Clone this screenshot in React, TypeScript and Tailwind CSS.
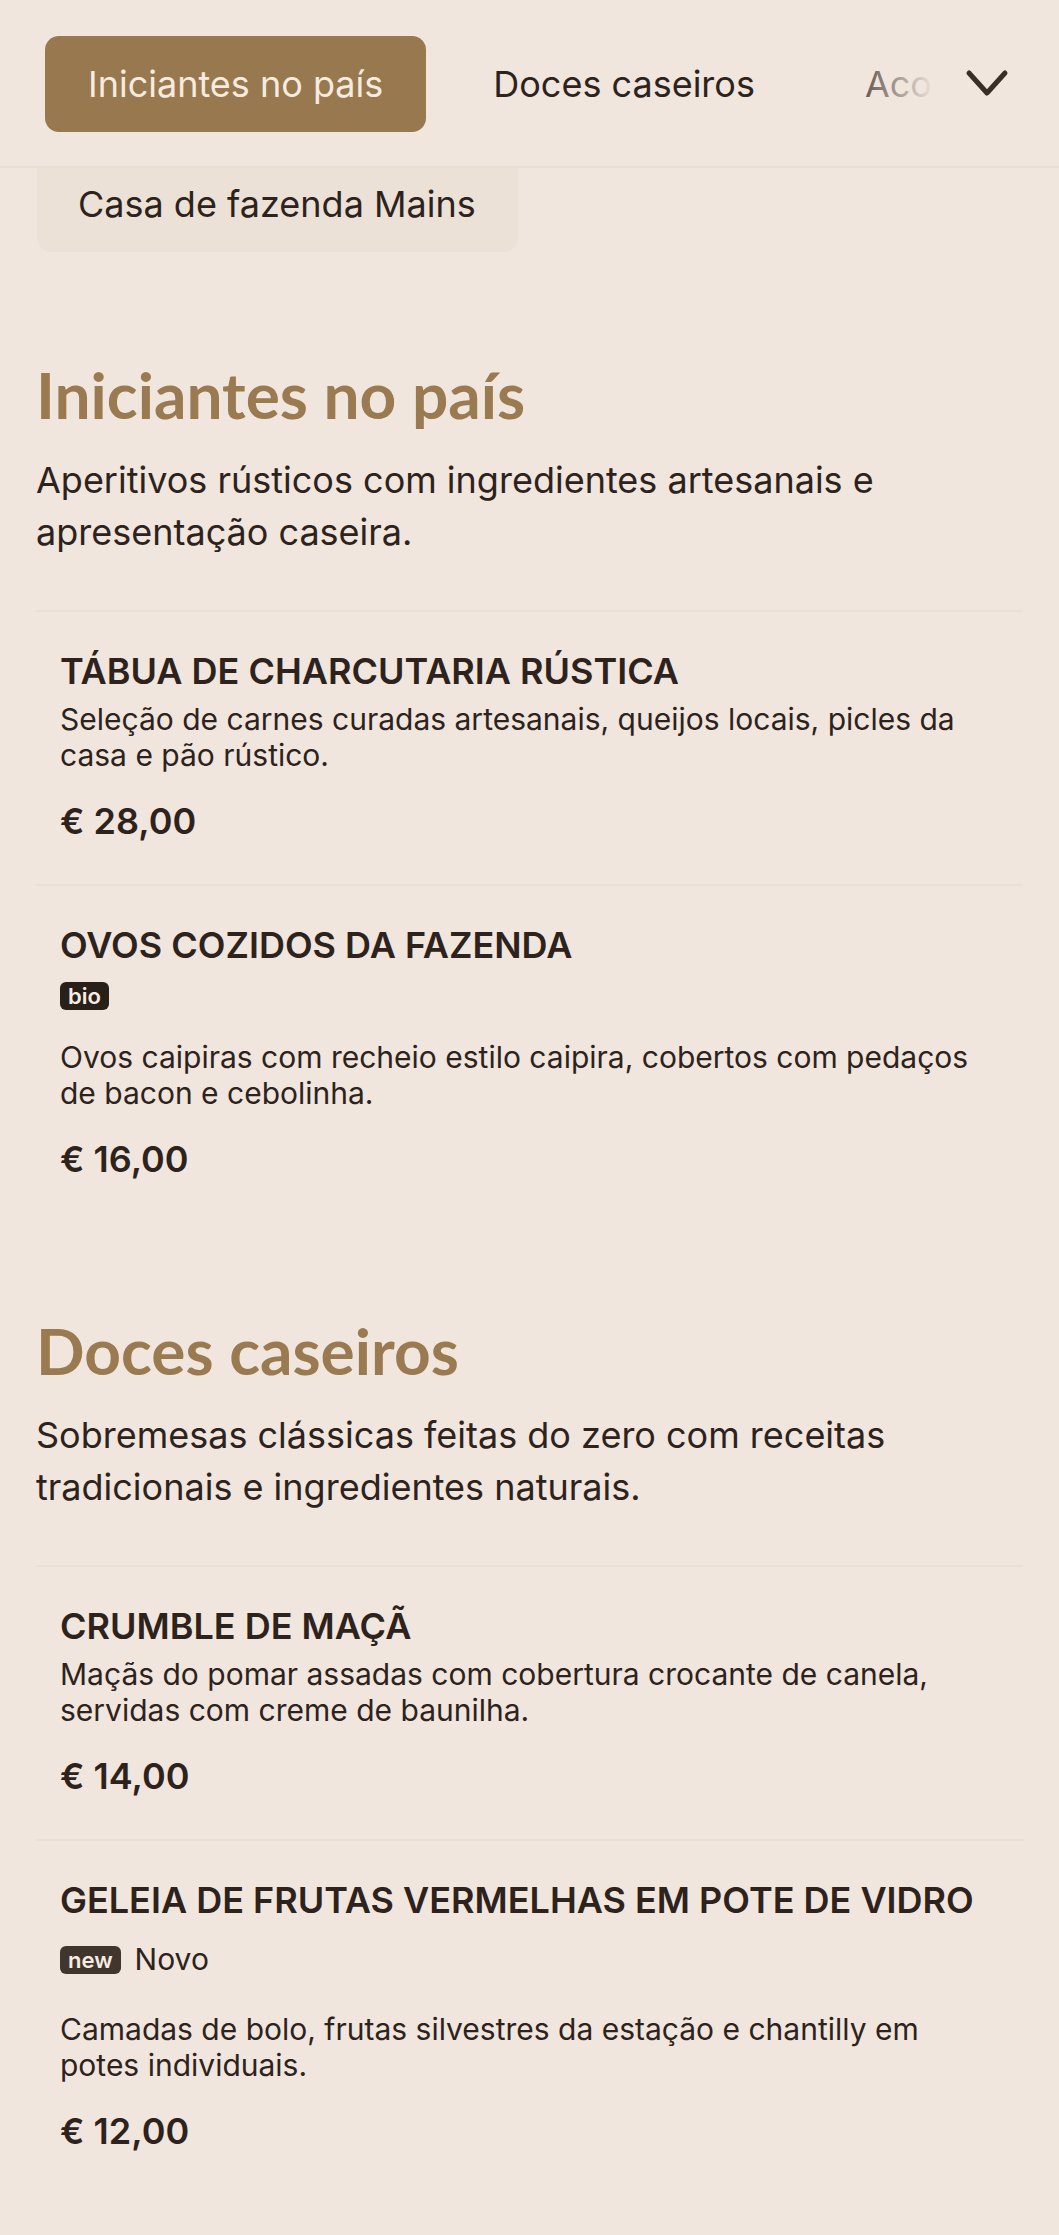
import React from "react";

type Item = {
  title: string;
  desc: string;
  price: string;
  badge?: { label: string; dark: boolean; text?: string };
};

const sections: { title: string; desc: string; items: Item[] }[] = [
  {
    title: "Iniciantes no país",
    desc: "Aperitivos rústicos com ingredientes artesanais e apresentação caseira.",
    items: [
      {
        title: "Tábua de charcutaria rústica",
        desc: "Seleção de carnes curadas artesanais, queijos locais, picles da casa e pão rústico.",
        price: "€ 28,00",
      },
      {
        title: "Ovos cozidos da fazenda",
        desc: "Ovos caipiras com recheio estilo caipira, cobertos com pedaços de bacon e cebolinha.",
        price: "€ 16,00",
        badge: { label: "bio", dark: true },
      },
    ],
  },
  {
    title: "Doces caseiros",
    desc: "Sobremesas clássicas feitas do zero com receitas tradicionais e ingredientes naturais.",
    items: [
      {
        title: "Crumble de maçã",
        desc: "Maçãs do pomar assadas com cobertura crocante de canela, servidas com creme de baunilha.",
        price: "€ 14,00",
      },
      {
        title: "Geleia de frutas vermelhas em pote de vidro",
        desc: "Camadas de bolo, frutas silvestres da estação e chantilly em potes individuais.",
        price: "€ 12,00",
        badge: { label: "new", dark: false, text: "Novo" },
      },
    ],
  },
];

function MenuItem({ item }: { item: Item }) {
  return (
    <div className="flex flex-col border-t-2 border-[#e9dfd5] px-6 pt-[37px] pb-[42px]">
      <h3 className="text-[36px] font-semibold uppercase leading-[45px] text-[#2d231c]">
        {item.title}
      </h3>
      {item.badge && (
        <div className="mt-[14px] mb-[22px] flex items-center gap-[14px]">
          <span
            className={
              item.badge.dark
                ? "flex h-[28px] items-center rounded-[6px] bg-[#2a201a] px-[8px] text-[22px] font-semibold leading-none text-[#f6ece2]"
                : "flex h-[28px] items-center rounded-[6px] bg-[#40362e] px-[8px] text-[22px] font-semibold leading-none text-[#f6ece2]"
            }
          >
            {item.badge.label}
          </span>
          {item.badge.text && (
            <span className="text-[30px] leading-[45px] text-[#2d231c]">{item.badge.text}</span>
          )}
        </div>
      )}
      <p className="mt-[7px] text-[30px] leading-[36px] text-[#2d231c]">{item.desc}</p>
      <p className="mt-[27px] text-[36px] font-semibold leading-[42px] text-[#2d231c]">{item.price}</p>
    </div>
  );
}

export default function App() {
  return (
    <div className="min-h-[2235px] bg-[#f0e6dd] font-[Inter,sans-serif] text-[#2d231c]">
      <header className="relative z-10 h-[168px] overflow-hidden border-b-2 border-[#e8ded4] bg-[#f0e6dd]">
        <nav className="flex items-start gap-6 whitespace-nowrap pl-[45px] pt-[36px]">
          <button className="flex h-[96px] shrink-0 items-center rounded-[14px] bg-[#98784f] px-[43px] text-[36px] text-[#f6ebdf]">
            Iniciantes no país
          </button>
          <button className="flex h-[96px] shrink-0 items-center px-[43px] text-[36px] text-[#2d231c]">
            Doces caseiros
          </button>
          <button className="flex h-[96px] shrink-0 items-center px-[43px] text-[36px] text-[#2d231c]">
            Acompanhamentos
          </button>
        </nav>
        <div className="absolute right-0 top-0 flex h-full">
          <div className="h-full w-[100px] bg-linear-to-r from-[#f0e6dd00] to-[#f0e6dd]" />
          <div className="flex h-full w-[124px] items-center justify-end bg-[#f0e6dd] pr-[50px]">
            <svg width="44" height="28" viewBox="0 0 44 28" fill="none">
              <polyline
                points="4,4 22,24 40,4"
                stroke="#3a2f28"
                strokeWidth="5"
                strokeLinecap="round"
                strokeLinejoin="round"
              />
            </svg>
          </div>
        </div>
      </header>

      <div className="relative -mt-[12px] ml-[37px] flex h-[96px] w-[481px] items-center whitespace-nowrap rounded-[14px] bg-[#ebe1d7] px-[41px] text-[36px] text-[#2d231c]">
        Casa de fazenda Mains
      </div>

      <main className="px-[36px] pb-[40px]">
        {sections.map((s, i) => (
          <section key={s.title} className={i === 0 ? "mt-[104px]" : "mt-[90px]"}>
            <h2 className="font-[Lato,sans-serif] text-[64px] font-bold leading-[1.23] text-[#9a7a51]">
              {s.title}
            </h2>
            <p className="mt-[19px] text-[36px] leading-[52px] text-[#2d231c]">{s.desc}</p>
            <div className="mt-[52px]">
              {s.items.map((it) => (
                <MenuItem key={it.title} item={it} />
              ))}
            </div>
          </section>
        ))}
      </main>
    </div>
  );
}
